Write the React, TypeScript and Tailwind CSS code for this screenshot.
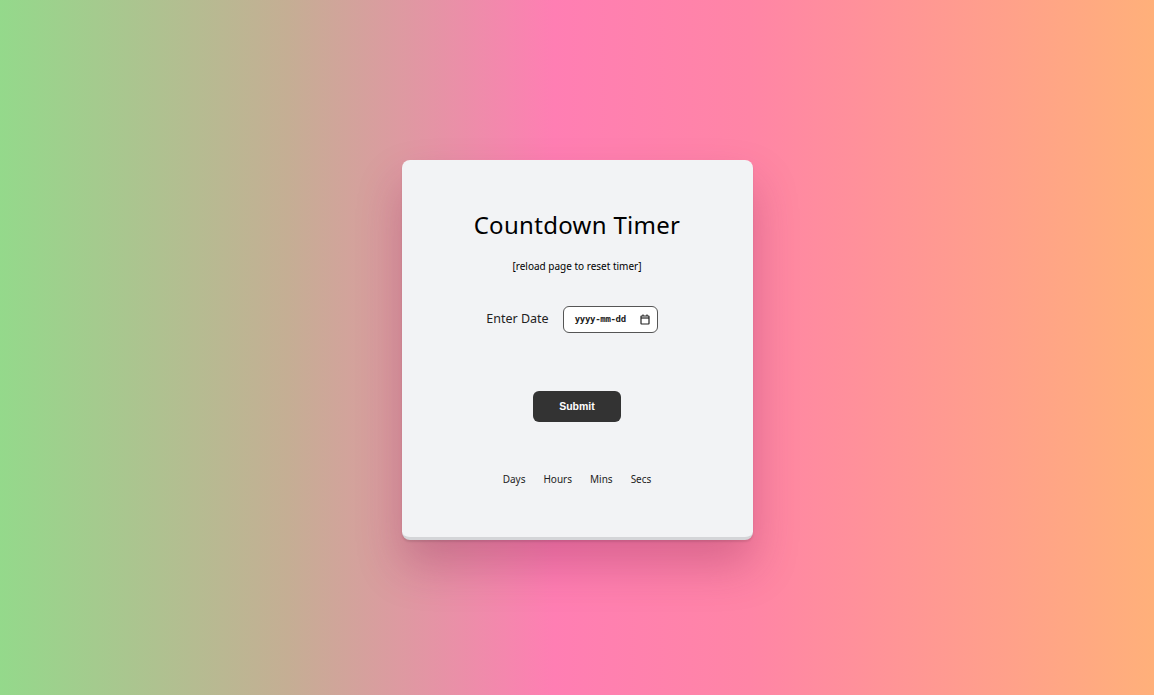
import React from "react";

function CalendarIcon() {
  return (
    <svg width="10" height="11" viewBox="0 0 10 11" fill="none" stroke="#222" strokeWidth="1.2">
      <rect x="1" y="2" width="8" height="8" rx="0.5" />
      <line x1="1" y1="4" x2="9" y2="4" />
      <line x1="3" y1="0.5" x2="3" y2="2" />
      <line x1="7" y1="0.5" x2="7" y2="2" />
    </svg>
  );
}

export default function App() {
  return (
    <div className="min-h-screen w-full flex items-center justify-center bg-[linear-gradient(to_right,#94d98b_0%,#c5ae94_25%,#ff7eb3_48%,#ff85a6_65%,#ffb07a_100%)] font-['Noto_Sans',sans-serif]">
      <div className="w-[351px] h-[380px] mt-[5px] bg-[#f2f3f5] rounded-[8px] border-b-[3px] border-[#d4d5d8] shadow-[0_2px_2px_rgba(0,0,0,0.1),0_25px_45px_rgba(120,30,70,0.28)] flex flex-col items-center pt-[50px]">
        <h1 className="text-[24px] leading-[30px] text-black tracking-[0.3px]">Countdown Timer</h1>
        <p className="mt-[18px] text-[10px] leading-[16px] text-black">[reload page to reset timer]</p>
        <div className="mt-[32px] mr-[10px] flex items-center gap-[14px]">
          <span className="text-[12.5px] text-[#222]">Enter Date</span>
          <div className="w-[95px] h-[27px] border-[1.5px] border-[#555] rounded-[6px] bg-white flex items-center pl-[11px] pr-[7px] justify-between">
            <span className="font-['DejaVu_Sans_Mono',monospace] font-bold text-[9px] text-[#222] tracking-[-0.3px]">yyyy-mm-dd</span>
            <CalendarIcon />
          </div>
        </div>
        <button className="mt-[58px] w-[88px] h-[31px] bg-[#333333] rounded-[6px] text-white text-[10.5px] font-bold font-['Liberation_Sans',Arial,sans-serif]">
          Submit
        </button>
        <div className="mt-[50px] flex gap-[18px] text-[10px] leading-[14px] text-[#222]">
          <span>Days</span>
          <span>Hours</span>
          <span>Mins</span>
          <span>Secs</span>
        </div>
      </div>
    </div>
  );
}
